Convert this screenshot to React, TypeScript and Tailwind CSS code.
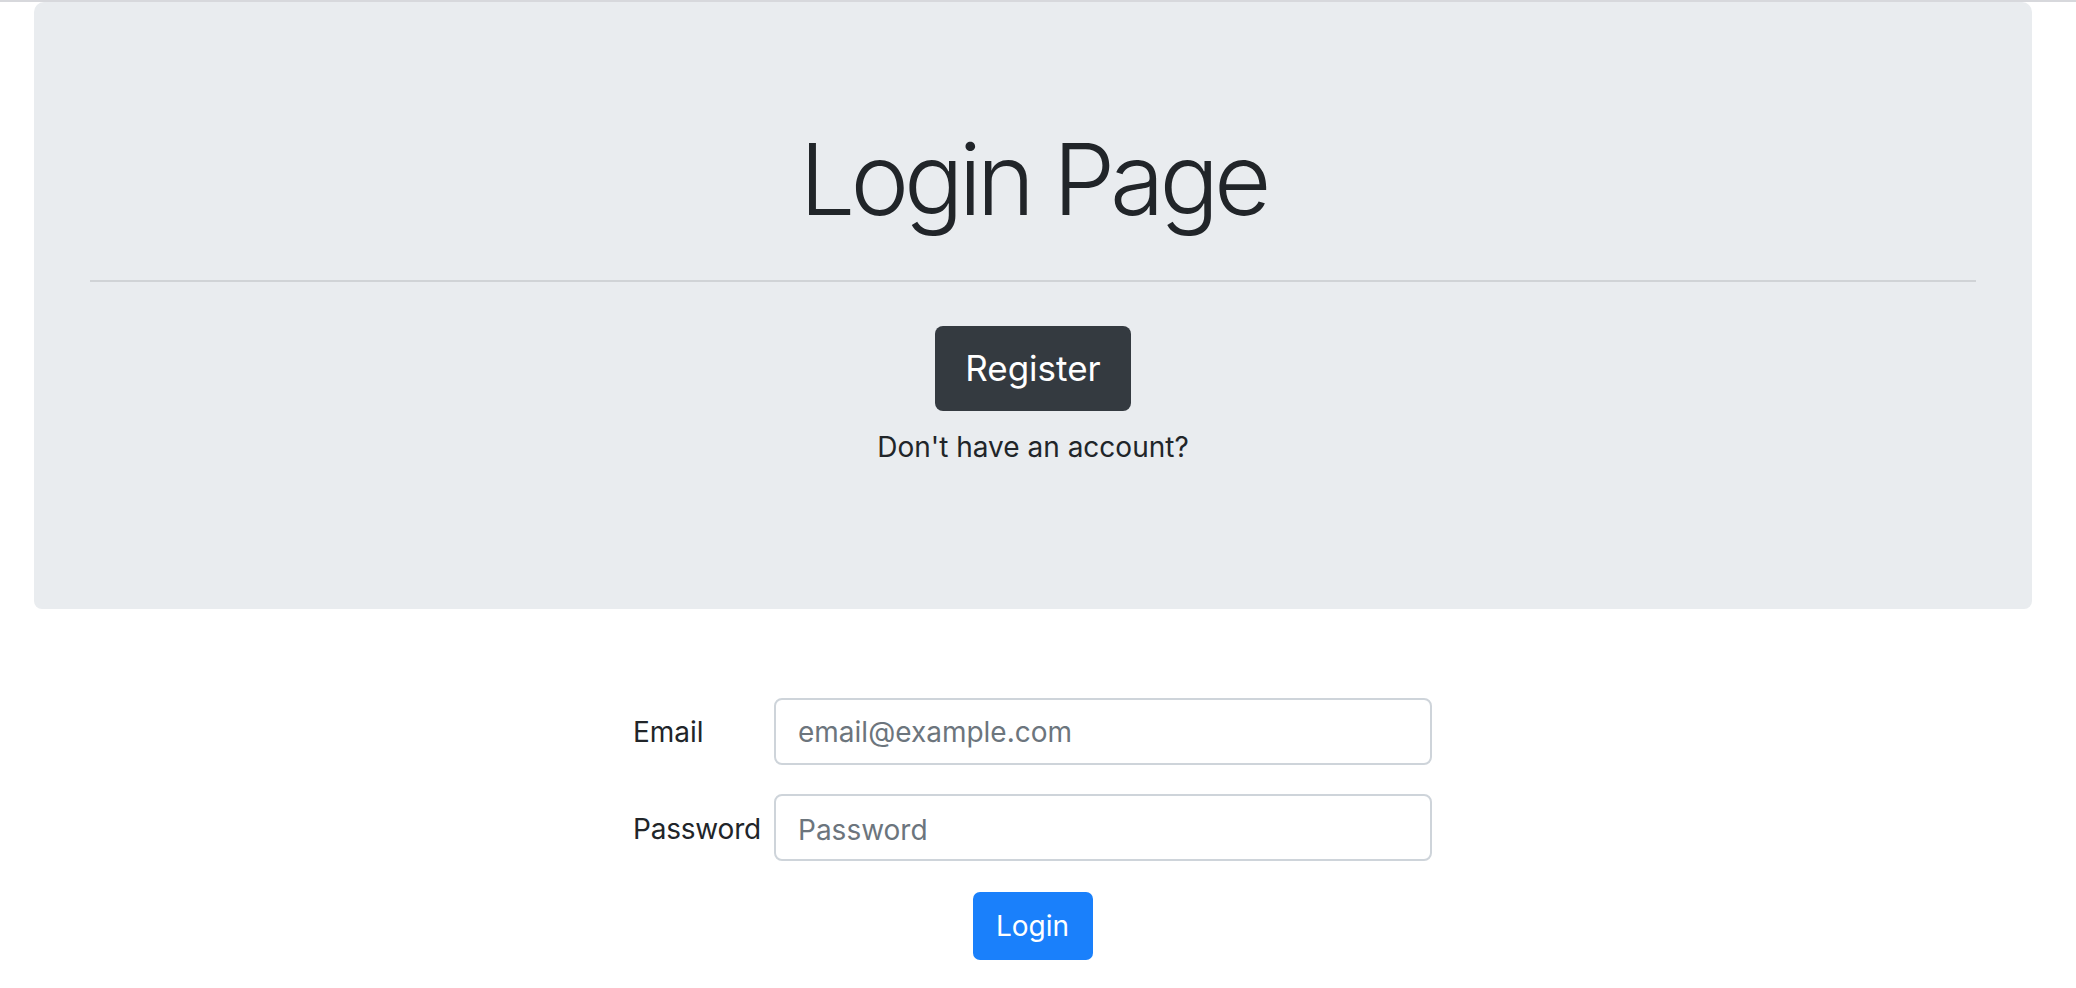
export default function App() {
  return (
    <div className="min-h-screen bg-white text-[#212529]" style={{ fontFamily: "Inter, 'Noto Sans', sans-serif" }}>
      <div className="h-[2px] bg-[#d7d8dc]" />

      {/* Jumbotron */}
      <div className="ml-[34px] w-[1998px] h-[607px] bg-[#e9ecef] rounded-b-[8px] rounded-t-[10px] px-[56px] pt-[118px] text-center">
        <h1 className="text-[99px] leading-[1.2] font-light text-[#212529] tracking-[-5px]">Login Page</h1>
        <div className="mt-[41px] h-[2px] bg-[#d0d3d6]" />
        <div className="mt-[44px] flex justify-center">
          <button className="w-[196px] h-[85px] rounded-[8px] bg-[#343a40] text-white text-[35px] leading-none">
            Register
          </button>
        </div>
        <p className="mt-[15px] text-[28px] leading-[1.5]">Don't have an account?</p>
      </div>

      {/* Login form */}
      <form className="ml-[633px] w-[799px] mt-[89px] flex flex-col">
        <div className="flex items-center">
          <label className="w-[141px] text-[28px] leading-[1.5]">Email</label>
          <input
            type="email"
            placeholder="email@example.com"
            className="w-[658px] h-[67px] rounded-[8px] border-2 border-[#ced4da] px-[22px] text-[28px] placeholder:text-[#6c757d] outline-none"
          />
        </div>
        <div className="mt-[29px] flex items-center">
          <label className="w-[141px] pt-[3px] text-[28px] leading-[1.5] tracking-[-0.2px]">Password</label>
          <input
            type="password"
            placeholder="Password"
            className="w-[658px] h-[67px] rounded-[8px] border-2 border-[#ced4da] px-[22px] pt-[4px] text-[28px] placeholder:text-[#6c757d] outline-none"
          />
        </div>
        <div className="mt-[31px] flex justify-center">
          <button type="button" className="w-[120px] h-[68px] rounded-[7px] bg-[#1a80fb] text-white text-[28px] leading-none">
            Login
          </button>
        </div>
      </form>
    </div>
  );
}
